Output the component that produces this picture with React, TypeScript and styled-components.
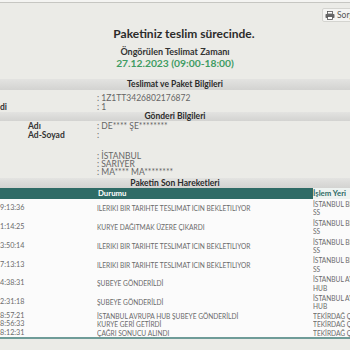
import React from "react";
import styled, { createGlobalStyle } from "styled-components";

const Global = createGlobalStyle`
  html, body { margin: 0; padding: 0; background: #ebebe7; }
  body { font-family: Lato, "Open Sans", sans-serif; overflow: hidden; }
`;

const Page = styled.div`
  width: 350px;
  height: 350px;
  overflow: hidden;
  background: #ebebe7;
  display: flex;
  flex-direction: column;
`;

const TopRule = styled.div`
  height: 2px;
  background: #f4f4f2;
  border-bottom: 1px solid #c6c6c2;
  flex: none;
`;

const Toolbar = styled.div`
  display: flex;
  justify-content: flex-start;
  padding-top: 5px;
  padding-left: 322px;
  height: 14px;
  flex: none;
  overflow: hidden;
`;

const PrintButton = styled.button`
  display: flex;
  flex: none;
  align-items: center;
  gap: 2px;
  height: 14px;
  padding: 0 4px 0 2px;
  border: 1px solid #d4d4d0;
  border-radius: 2px;
  background: #f5f5f3;
  color: #555;
  font-family: Lato, sans-serif;
  font-size: 8.5px;
  white-space: nowrap;
`;

const Title = styled.div`
  margin-top: 5px;
  padding-left: 18px;
  text-align: center;
  font-size: 12px;
  line-height: 13px;
  font-weight: 700;
  color: #2b2b2b;
`;

const Sub = styled.div`
  margin-top: 6px;
  text-align: center;
  font-size: 9px;
  line-height: 11px;
  font-weight: 700;
  color: #333;
`;

const DateText = styled.div`
  text-align: center;
  font-size: 10.3px;
  line-height: 12px;
  font-weight: 700;
  color: #3f9c63;
`;

const SectionBar = styled.div<{ $top: number; $h: number }>`
  margin-top: ${(p) => p.$top}px;
  height: ${(p) => p.$h}px;
  line-height: ${(p) => p.$h}px;
  flex: none;
  background: linear-gradient(#e3e3e1, #d3d3d1);
  text-align: center;
  font-size: 8.5px;
  font-weight: 700;
  color: #2b2b2b;
`;

const InfoRow = styled.div<{ $h?: number; $top?: number }>`
  display: grid;
  grid-template-columns: 97px 1fr;
  height: ${(p) => p.$h ?? 9}px;
  line-height: ${(p) => p.$h ?? 9}px;
  margin-top: ${(p) => p.$top ?? 0}px;
  font-size: 8.5px;
  flex: none;
`;

const Label = styled.div<{ $indent: number }>`
  padding-left: ${(p) => p.$indent}px;
  font-weight: 700;
  color: #333;
  white-space: nowrap;
  overflow: hidden;
`;

const Value = styled.div`
  color: #666;
  white-space: pre;
`;

const Table = styled.div`
  display: flex;
  flex-direction: column;
  flex: none;
  background: #fbfbfb;
  border-bottom: 2px solid #6f9c98;
`;

const HeadRow = styled.div`
  display: grid;
  grid-template-columns: 97px 216px 1fr;
  height: 11px;
  background: #2f6b66;
`;

const HeadCell = styled.div<{ $active?: boolean }>`
  padding-left: ${(p) => (p.$active ? 0 : 1)}px;
  line-height: 11px;
  font-size: 7.8px;
  font-weight: 700;
  color: ${(p) => (p.$active ? "#2f6b66" : "#ffffff")};
  background: ${(p) => (p.$active ? "#eef3f1" : "transparent")};
  white-space: nowrap;
`;

const BodyRow = styled.div<{ $pad: number }>`
  display: grid;
  grid-template-columns: 97px 216px 1fr;
  align-items: center;
  padding: ${(p) => p.$pad}px 0;
  font-size: 6.6px;
  line-height: 8.4px;
  color: #6a6a6a;
`;

const Cell = styled.div`
  white-space: nowrap;
  overflow: hidden;
`;

const TimeCell = styled(Cell)`
  font-size: 7.2px;
`;

const Place = styled.div`
  white-space: nowrap;
  overflow: hidden;
  display: flex;
  flex-direction: column;
`;

const PrinterIcon = () => (
  <svg width="10" height="9" viewBox="0 0 10 9">
    <rect x="2.5" y="0.5" width="5" height="2.5" fill="#fff" stroke="#555" strokeWidth="0.8" />
    <rect x="0.5" y="3" width="9" height="4" rx="0.8" fill="#666" />
    <rect x="2.5" y="5.5" width="5" height="3" fill="#fff" stroke="#555" strokeWidth="0.8" />
  </svg>
);

type Move = { time: string; status: string; place: string[] };

const moves: Move[] = [
  { time: "9:13:36", status: "ILERIKI BIR TARIHTE TESLIMAT ICIN BEKLETILIYOR", place: ["İSTANBUL BEYKOZ ANADOLU", "SS"] },
  { time: "1:14:25", status: "KURYE DAĞITMAK ÜZERE ÇIKARDI", place: ["İSTANBUL BEYKOZ ANADOLU", "SS"] },
  { time: "3:50:14", status: "ILERIKI BIR TARIHTE TESLIMAT ICIN BEKLETILIYOR", place: ["İSTANBUL BEYKOZ ANADOLU", "SS"] },
  { time: "7:13:13", status: "ILERIKI BIR TARIHTE TESLIMAT ICIN BEKLETILIYOR", place: ["İSTANBUL BEYKOZ ANADOLU", "SS"] },
  { time: "4:38:31", status: "ŞUBEYE GÖNDERİLDİ", place: ["İSTANBUL AVRUPA", "HUB"] },
  { time: "2:31:18", status: "ŞUBEYE GÖNDERİLDİ", place: ["İSTANBUL AVRUPA", "HUB"] },
  { time: "8:57:21", status: "İSTANBUL AVRUPA HUB ŞUBEYE GÖNDERİLDİ", place: ["TEKİRDAĞ ÇORLU"] },
  { time: "8:56:33", status: "KURYE GERİ GETİRDİ", place: ["TEKİRDAĞ ÇORLU"] },
  { time: "8:12:31", status: "ÇAĞRI SONUCU ALINDI", place: ["TEKİRDAĞ ÇORLU"] },
];

export default function App() {
  return (
    <Page>
      <Global />
      <TopRule />
      <Toolbar>
        <PrintButton>
          <PrinterIcon />
          Sorgu Sonucunu Yazdır
        </PrintButton>
      </Toolbar>
      <Title>Paketiniz teslim sürecinde.</Title>
      <Sub>Öngörülen Teslimat Zamanı</Sub>
      <DateText>27.12.2023 (09:00-18:00)</DateText>

      <SectionBar $top={10} $h={11}>Teslimat ve Paket Bilgileri</SectionBar>
      <InfoRow $top={4}>
        <Label $indent={0}></Label>
        <Value>: 1Z1TT3426802176872</Value>
      </InfoRow>
      <InfoRow>
        <Label $indent={0}>di</Label>
        <Value>: 1</Value>
      </InfoRow>
      <SectionBar $top={0} $h={9}>Gönderi Bilgileri</SectionBar>
      <InfoRow $top={1}>
        <Label $indent={28}>Adı</Label>
        <Value>: DE**** ŞE********</Value>
      </InfoRow>
      <InfoRow>
        <Label $indent={28}>Ad-Soyad</Label>
        <Value>:</Value>
      </InfoRow>
      <InfoRow $h={12}>
        <Label $indent={28}></Label>
        <Value></Value>
      </InfoRow>
      <InfoRow $h={8}>
        <Label $indent={28}></Label>
        <Value>: İSTANBUL</Value>
      </InfoRow>
      <InfoRow $h={8}>
        <Label $indent={28}></Label>
        <Value>: SARIYER</Value>
      </InfoRow>
      <InfoRow $h={8}>
        <Label $indent={28}></Label>
        <Value>: MA**** MA********</Value>
      </InfoRow>
      <SectionBar $top={2} $h={10}>Paketin Son Hareketleri</SectionBar>

      <Table>
        <HeadRow>
          <HeadCell></HeadCell>
          <HeadCell>Durumu</HeadCell>
          <HeadCell $active>İşlem Yeri</HeadCell>
        </HeadRow>
        {moves.map((m, i) => (
          <BodyRow key={i} $pad={m.place.length > 1 ? 1 : 0}>
            <TimeCell>{m.time}</TimeCell>
            <Cell>{m.status}</Cell>
            <Place>
              {m.place.map((p, j) => (
                <span key={j}>{p}</span>
              ))}
            </Place>
          </BodyRow>
        ))}
      </Table>
    </Page>
  );
}
